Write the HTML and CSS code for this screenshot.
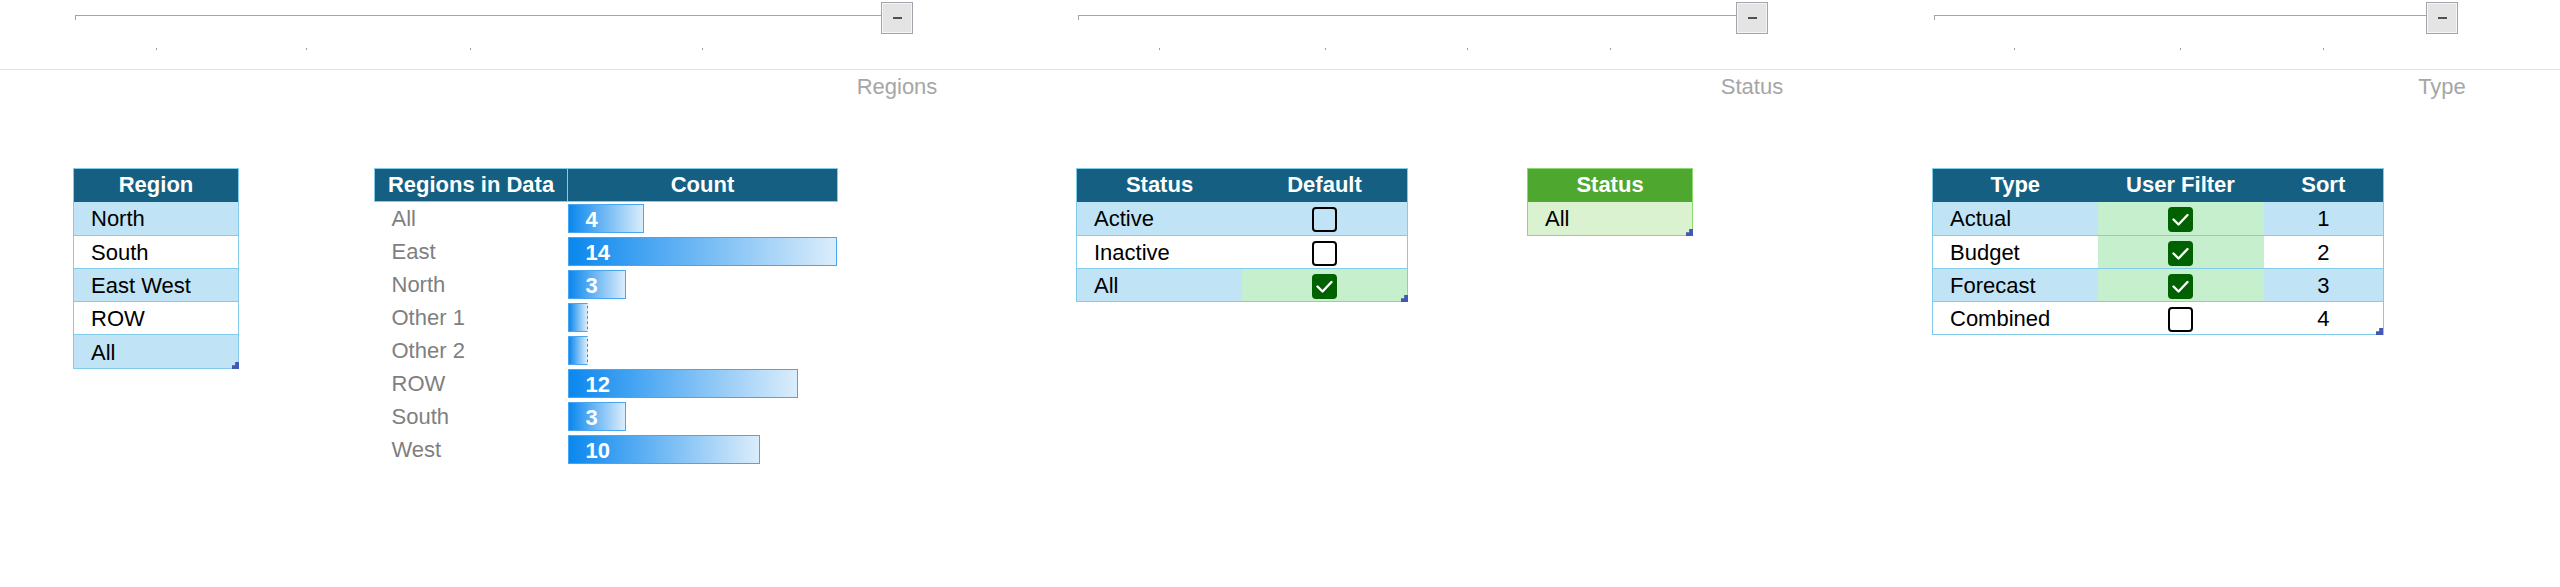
FILE: index.html
```html
<!DOCTYPE html>
<html>
	<head>
		<meta charset="UTF-8">
		<title>Filters</title>
		<link rel="stylesheet" href="styles.css">
	</head>
	<body>
		<div class="outline">
			<div class="group g1"><span class="track"></span><span class="btn"></span></div>
			<div class="group g2"><span class="track"></span><span class="btn"></span></div>
			<div class="group g3"><span class="track"></span><span class="btn"></span></div>
			<i class="tick c2"></i>
			<i class="tick c3"></i>
			<i class="tick c4"></i>
			<i class="tick c5"></i>
			<i class="tick c8"></i>
			<i class="tick c9"></i>
			<i class="tick c10"></i>
			<i class="tick c11"></i>
			<i class="tick c14"></i>
			<i class="tick c15"></i>
			<i class="tick c16"></i>
		</div>

		<div class="sheet">
			<div class="label c6">Regions</div>
			<div class="label c12">Status</div>
			<div class="label c17">Type</div>

			<!-- region list -->
			<div class="tbl t-region">
				<table class="blue">
					<tr><th>Region</th></tr>
					<tr><td>North</td></tr>
					<tr><td>South</td></tr>
					<tr><td>East West</td></tr>
					<tr><td>ROW</td></tr>
					<tr><td>All</td></tr>
				</table>
				<span class="grip"></span>
			</div>

			<!-- regions found in data -->
			<div class="tbl t-data">
				<table class="data">
					<colgroup><col class="w193"><col class="w270"></colgroup>
					<tr><th>Regions in Data</th><th>Count</th></tr>
					<tr><td>All</td><td class="bar-cell"><div class="bar" style="width:76px">4</div></td></tr>
					<tr><td>East</td><td class="bar-cell"><div class="bar" style="width:269px">14</div></td></tr>
					<tr><td>North</td><td class="bar-cell"><div class="bar" style="width:58px">3</div></td></tr>
					<tr><td>Other 1</td><td class="bar-cell"><div class="bar zero" style="width:20px"></div></td></tr>
					<tr><td>Other 2</td><td class="bar-cell"><div class="bar zero" style="width:20px"></div></td></tr>
					<tr><td>ROW</td><td class="bar-cell"><div class="bar" style="width:230px">12</div></td></tr>
					<tr><td>South</td><td class="bar-cell"><div class="bar" style="width:58px">3</div></td></tr>
					<tr><td>West</td><td class="bar-cell"><div class="bar" style="width:192px">10</div></td></tr>
				</table>
			</div>

			<!-- status defaults -->
			<div class="tbl t-status">
				<table class="blue">
					<tr><th>Status</th><th>Default</th></tr>
					<tr><td>Active</td><td class="mid"><span class="check"></span></td></tr>
					<tr><td>Inactive</td><td class="mid"><span class="check"></span></td></tr>
					<tr><td>All</td><td class="mid good"><span class="check on"><svg viewBox="0 0 25 25"><polyline points="5.5,12.5 10.5,17.5 19.5,8"/></svg></span></td></tr>
				</table>
				<span class="grip"></span>
			</div>

			<!-- picked status -->
			<div class="tbl t-pick">
				<table class="green">
					<tr><th>Status</th></tr>
					<tr><td>All</td></tr>
				</table>
				<span class="grip"></span>
			</div>

			<!-- types -->
			<div class="tbl t-type">
				<table class="blue">
					<colgroup><col class="w165"><col class="w166"><col class="w120"></colgroup>
					<tr><th>Type</th><th>User Filter</th><th>Sort</th></tr>
					<tr><td>Actual</td><td class="mid good"><span class="check on"><svg viewBox="0 0 25 25"><polyline points="5.5,12.5 10.5,17.5 19.5,8"/></svg></span></td><td class="mid">1</td></tr>
					<tr><td>Budget</td><td class="mid good"><span class="check on"><svg viewBox="0 0 25 25"><polyline points="5.5,12.5 10.5,17.5 19.5,8"/></svg></span></td><td class="mid">2</td></tr>
					<tr><td>Forecast</td><td class="mid good"><span class="check on"><svg viewBox="0 0 25 25"><polyline points="5.5,12.5 10.5,17.5 19.5,8"/></svg></span></td><td class="mid">3</td></tr>
					<tr><td>Combined</td><td class="mid"><span class="check"></span></td><td class="mid">4</td></tr>
				</table>
				<span class="grip"></span>
			</div>
		</div>
	</body>
</html>
```

FILE: styles.css
```css
*{margin:0;padding:0;}
body{
	background:#fff;
	font-family:"Liberation Sans", Arial, sans-serif;
	font-size:22px;
	color:#000;
}
.outline, .sheet{
	display:grid;
	grid-template-columns:73px 166px 135px 193px 270px 120px 119px 166px 166px 119px 166px 118px 121px 165px 166px 120px 118px 1fr;
}

/* column grouping bar */
.outline{
	grid-template-rows:36px 33px;
	height:69px;
	border-bottom:1px solid #e3e3e3;
}
.group{
	grid-row:1;
	display:flex;
	align-items:flex-start;
	padding-top:2px;
}
.g1{grid-column:2/7;}
.g2{grid-column:8/13;}
.g3{grid-column:14/18;}
.track{
	flex:1;
	height:4px;
	margin:13px 0 0 2px;
	border-top:1px solid #a3a3a3;
	border-left:1px solid #a3a3a3;
}
.btn{
	width:32px;
	height:32px;
	box-sizing:border-box;
	margin-right:44px;
	border:1px solid #a4a4ac;
	box-shadow:inset 0 0 0 1px #f5f5f5;
	background:#e4e4e4;
	display:flex;
	align-items:center;
	justify-content:center;
}
.g2 .btn, .g3 .btn{margin-right:43px;}
.btn:before{
	content:"";
	width:9px;
	height:2px;
	background:#505050;
}
.tick{
	grid-row:2;
	justify-self:center;
	align-self:start;
	width:1px;
	height:2px;
	margin-top:12px;
	background:#9a9a9a;
}
.c2{grid-column:2;}
.c3{grid-column:3;}
.c4{grid-column:4;}
.c5{grid-column:5;}
.c6{grid-column:6;}
.c8{grid-column:8;}
.c9{grid-column:9;}
.c10{grid-column:10;}
.c11{grid-column:11;}
.c12{grid-column:12;}
.c14{grid-column:14;}
.c15{grid-column:15;}
.c16{grid-column:16;}
.c17{grid-column:17;}

/* sheet */
.sheet{
	grid-template-rows:33px 33px 32px auto;
	align-items:start;
}
.label{
	grid-row:1;
	align-self:center;
	text-align:center;
	color:#a6a6a6;
}
.tbl{grid-row:4; position:relative;}
.t-region{grid-column:2;}
.t-data{grid-column:4/6;}
.t-status{grid-column:8/10;}
.t-pick{grid-column:11;}
.t-type{grid-column:14/17;}

table{
	width:100%;
	border-collapse:collapse;
	table-layout:fixed;
}
.w193{width:193px;}
.w270{width:270px;}
.w165{width:165px;}
.w166{width:166px;}
.w120{width:120px;}
th, td{
	height:33px;
	padding:2px 0 0 17px;
	box-sizing:border-box;
	text-align:left;
	vertical-align:middle;
	white-space:nowrap;
}
.blue td, .green td{height:33px;}
.blue tr:nth-child(2) td, .green tr:nth-child(2) td, .blue tr:nth-child(6) td{height:34px;}
th{
	height:33px;
	padding:0;
	text-align:center;
	font-weight:bold;
	color:#fff;
	background:#156082;
}
.blue{border:1px solid #83cbeb;}
.blue td{border-bottom:1px solid #83cbeb;}
.blue tr:nth-child(even) td{background:#c0e4f5;}
.blue tr td.good{background:#c6efce;}
td.mid{padding:2px 0 0; text-align:center;}
td.mid .check{margin-top:-2px;}

.data th{border:1px solid #83cbeb;}
.data td{color:#7f7f7f;}
.data td.bar-cell{padding:0;}
.bar{
	height:29px;
	box-sizing:border-box;
	padding-left:17px;
	line-height:29px;
	border:1px solid #48a5f1;
	background:linear-gradient(to right, #0a87ee, #dbedfb);
	color:#fff;
	font-weight:bold;
}
.bar.zero{border-right:1px dashed #cfe6fb;}

.green{border:1px solid #8ed973;}
.green th{background:#4ea72e;}
.green td{background:#daf2d0;}

.check{
	display:inline-block;
	width:25px;
	height:25px;
	box-sizing:border-box;
	border:2px solid #000;
	border-radius:4px;
	vertical-align:middle;
}
.check.on{
	border:0;
	background:#006100;
}
.check svg{
	display:block;
	width:25px;
	height:25px;
}
.check polyline{
	fill:none;
	stroke:#fff;
	stroke-width:2.4;
	stroke-linecap:round;
	stroke-linejoin:round;
}
.grip{
	position:absolute;
	right:0;
	bottom:0;
	width:7px;
	height:7px;
	background:#4557b5;
	clip-path:polygon(100% 0, 100% 100%, 0 100%, 0 45%, 45% 45%, 45% 0);
}
```
